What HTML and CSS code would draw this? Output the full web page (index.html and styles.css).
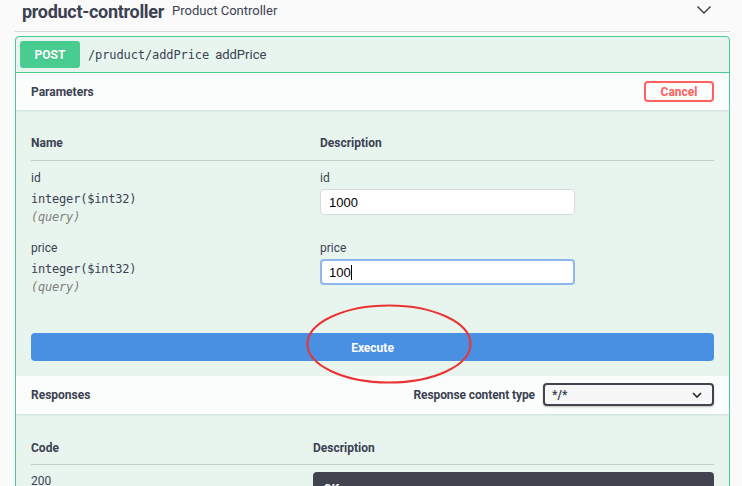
FILE: index.html
```html
<!DOCTYPE html>
<html>
<head>
<meta charset="utf-8">
<link rel="stylesheet" href="styles.css">
</head>
<body>
<div class="wrapper">
  <div class="tag-header">
    <span class="tag-name">product-controller</span>
    <span class="tag-desc">Product Controller</span>
    <svg class="tag-arrow" width="16" height="10" viewBox="0 0 16 10"><polyline points="1.5,1.5 8,8 14.5,1.5" fill="none" stroke="#3b3b3b" stroke-width="1.4"/></svg>
  </div>

  <div class="opblock">
    <div class="summary">
      <span class="method">POST</span>
      <span class="path">/pruduct/addPrice</span>
      <span class="summary-desc">addPrice</span>
    </div>

    <div class="section-header">
      <span class="section-title">Parameters</span>
      <button class="btn-cancel">Cancel</button>
    </div>

    <div class="section-body">
      <div class="ptable">
        <div class="prow phead">
          <div class="col-name">Name</div>
          <div class="col-desc">Description</div>
        </div>
        <div class="prow">
          <div class="col-name">
            <div class="pname">id</div>
            <div class="ptype">integer($int32)</div>
            <div class="pin">(query)</div>
          </div>
          <div class="col-desc">
            <div class="pdesc">id</div>
            <div class="input">1000</div>
          </div>
        </div>
        <div class="prow">
          <div class="col-name">
            <div class="pname">price</div>
            <div class="ptype">integer($int32)</div>
            <div class="pin">(query)</div>
          </div>
          <div class="col-desc">
            <div class="pdesc">price</div>
            <div class="input focused">100<span class="caret"></span></div>
          </div>
        </div>
      </div>
      <button class="btn-execute">Execute</button>
    </div>

    <div class="section-header resp-header">
      <span class="section-title">Responses</span>
      <div class="ctype">
        <span class="ctype-label">Response content type</span>
        <div class="select">
          <span>*/*</span>
          <svg width="10" height="6" viewBox="0 0 10 6"><polyline points="1,1 5,5 9,1" fill="none" stroke="#222" stroke-width="1.6"/></svg>
        </div>
      </div>
    </div>

    <div class="section-body resp-body">
      <div class="rrow rhead">
        <div class="rcol-code">Code</div>
        <div class="rcol-desc">Description</div>
      </div>
      <div class="rrow">
        <div class="rcol-code code-val">200</div>
        <div class="rcol-desc"><div class="ok-box">OK</div></div>
      </div>
    </div>
  </div>
</div>
<svg class="annot" width="170" height="84" viewBox="0 0 170 84"><ellipse cx="84" cy="41" rx="81.5" ry="38.5" fill="none" stroke="#ea3434" stroke-width="2"/></svg>
</body>
</html>
```

FILE: styles.css
```css
html, body {
  margin: 0;
  padding: 0;
}
body {
  background: #fafafa;
  font-family: Roboto, "Open Sans", sans-serif;
  color: #3b4151;
  width: 742px;
  height: 486px;
  overflow: hidden;
  position: relative;
}
.wrapper {
  margin-left: 15px;
  width: 715px;
}
.tag-header {
  height: 32px;
  box-sizing: border-box;
  border-bottom: 1px solid #d8d8d8;
  display: flex;
  align-items: flex-start;
  padding-left: 7px;
  padding-top: 1px;
}
.tag-name {
  font-size: 18px;
  font-weight: 700;
  letter-spacing: -0.3px;
  line-height: 22px;
}
.tag-desc {
  font-size: 13px;
  margin-left: 8px;
  line-height: 20px;
  color: #3b4151;
}
.tag-arrow {
  margin-left: auto;
  margin-right: 18px;
  margin-top: 4px;
}
.opblock {
  margin-top: 4px;
  width: 715px;
  box-sizing: border-box;
  border: 1px solid #49cc90;
  border-radius: 4px;
  background: #e8f5ef;
  overflow: hidden;
  height: 460px;
}
.summary {
  display: flex;
  align-items: center;
  padding: 4px;
  border-bottom: 1px solid #49cc90;
}
.method {
  width: 60px;
  height: 27px;
  background: #49cc90;
  color: #fff;
  border-radius: 3px;
  font-weight: 700;
  font-size: 12px;
  display: flex;
  align-items: center;
  justify-content: center;
  text-shadow: 0 1px 0 rgba(0,0,0,.1);
}
.path {
  font-family: "DejaVu Sans Mono", monospace;
  font-size: 12px;
  margin-left: 8px;
  letter-spacing: -0.1px;
}
.summary-desc {
  font-size: 13px;
  margin-left: 6px;
}
.section-header {
  display: flex;
  align-items: center;
  justify-content: space-between;
  padding: 8px 15px;
  height: 21px;
  background: rgba(255,255,255,.8);
  box-shadow: 0 1px 2px rgba(0,0,0,.1);
  position: relative;
}
.section-title {
  font-size: 12px;
  font-weight: 700;
}
.btn-cancel {
  width: 70px;
  height: 21px;
  box-sizing: border-box;
  border: 2px solid #ff6060;
  border-radius: 4px;
  background: transparent;
  color: #ff6060;
  font-family: Roboto, sans-serif;
  font-weight: 700;
  font-size: 12px;
  padding: 0;
}
.section-body {
  padding: 20px 15px 15px;
}
.prow {
  display: flex;
  padding: 9px 0 5px;
}
.prow.phead {
  padding: 6px 0 9px;
  border-bottom: 1px solid #c3cdca;
  font-size: 12px;
  font-weight: 700;
  line-height: 15px;
}
.col-name {
  width: 289px;
  flex: none;
}
.col-desc {
  flex: 1;
}
.pname, .pdesc {
  font-size: 12px;
  line-height: 16px;
}
.ptype {
  font-family: "DejaVu Sans Mono", monospace;
  font-size: 12px;
  line-height: 18px;
  margin-top: 4px;
  letter-spacing: -0.2px;
}
.pin {
  font-family: "DejaVu Sans Mono", monospace;
  font-size: 12px;
  font-style: italic;
  color: #808080;
  line-height: 18px;
  letter-spacing: -0.2px;
}
.input {
  margin-top: 3px;
  width: 255px;
  height: 26px;
  box-sizing: border-box;
  background: #fff;
  border: 1px solid #d9d9d9;
  border-radius: 4px;
  font-family: "Liberation Sans", Arial, sans-serif;
  font-size: 13px;
  color: #000;
  padding: 0 8px;
  display: flex;
  align-items: center;
}
.input.focused {
  border: 2px solid #8fb5ee;
  padding: 0 7px;
}
.caret {
  display: inline-block;
  width: 1px;
  height: 15px;
  background: #000;
}
.btn-execute {
  display: block;
  margin-top: 32px;
  width: 100%;
  height: 28px;
  border: none;
  border-radius: 4px;
  background: #4990e2;
  color: #fff;
  font-family: Roboto, sans-serif;
  font-weight: 700;
  font-size: 12px;
  padding: 1px 0 0;
}
.resp-header {
  height: 23px;
  padding: 7px 15px 8px;
}
.ctype {
  display: flex;
  align-items: center;
}
.ctype-label {
  font-size: 12px;
  font-weight: 700;
  margin-right: 8px;
  letter-spacing: -0.1px;
}
.select {
  width: 171px;
  height: 23px;
  box-sizing: border-box;
  border: 2px solid #41444e;
  border-radius: 4px;
  background: #f7f7f7;
  display: flex;
  align-items: center;
  justify-content: space-between;
  padding: 0 10px 0 7px;
  font-size: 12px;
  font-weight: 700;
  box-shadow: 0 1px 2px rgba(0,0,0,.25);
}
.resp-body {
  padding-top: 20px;
}
.rrow {
  display: flex;
}
.rrow.rhead {
  padding: 7px 0 8px;
  border-bottom: 1px solid #c3cdca;
  font-size: 12px;
  font-weight: 700;
  line-height: 15px;
}
.rcol-code {
  width: 282px;
  flex: none;
}
.rcol-desc {
  flex: 1;
}
.code-val {
  font-size: 12px;
  line-height: 16px;
  padding-top: 8px;
}
.ok-box {
  margin-top: 7px;
  background: #41444e;
  border-radius: 4px;
  height: 40px;
  color: #fff;
  font-weight: 700;
  font-style: italic;
  font-size: 12px;
  padding: 10px 10px;
  box-sizing: border-box;
}
.annot {
  position: absolute;
  left: 305px;
  top: 303px;
}
```
